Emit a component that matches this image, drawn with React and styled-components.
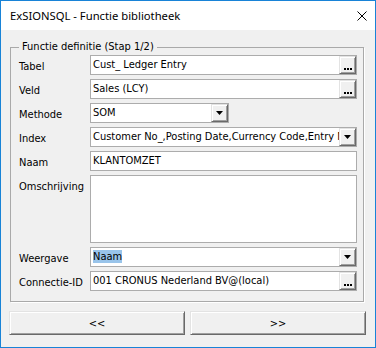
import React from 'react';
import styled, { createGlobalStyle } from 'styled-components';

const Global = createGlobalStyle`
  html, body { margin: 0; padding: 0; background: #ffffff; }
  body { font-family: "DejaVu Sans", sans-serif; }
`;

const uiFont = `
  font-family: "DejaVu Sans Condensed", "DejaVu Sans", sans-serif;
  font-stretch: condensed;
  font-size: 11px;
  color: #000;
`;

const Window = styled.div`
  box-sizing: border-box;
  width: 376px;
  height: 348px;
  border: 1px solid #1883d7;
  background: #f0f0f0;
  display: flex;
  flex-direction: column;
  overflow: hidden;
`;

const TitleBar = styled.div`
  flex: none;
  height: 29px;
  background: #ffffff;
  display: flex;
  align-items: center;
  padding: 0 8px 0 9px;
  font-family: "Noto Sans", "Open Sans", sans-serif;
  font-size: 11.25px;
  color: #000;
`;

const Title = styled.span`
  flex: 1;
  white-space: nowrap;
`;

const Close = styled.span`
  display: flex;
  width: 10px;
  height: 10px;
`;

const Body = styled.div`
  display: flex;
  flex-direction: column;
  padding: 9px 9px 0 8px;
`;

const Group = styled.fieldset`
  margin: 0 2px 0 1px;
  padding: 0 6px 10px 8px;
  border: 1px solid #a9a9a9;
  box-shadow: 1px 1px 0 #ffffff;
  min-width: 0;
`;

const Legend = styled.legend`
  ${uiFont}
  line-height: 16px;
  padding: 0 3px;
  margin: 0;
`;

const Form = styled.div`
  display: grid;
  grid-template-columns: 71px 1fr;
  row-gap: 4px;
`;

const Label = styled.div`
  ${uiFont}
  line-height: 15px;
  padding-top: 4px;
  white-space: nowrap;
`;

const Field = styled.div`
  box-sizing: border-box;
  height: ${p => p.$h || 20}px;
  width: ${p => (p.$w ? `${p.$w}px` : 'auto')};
  border: 1px solid #acacac;
  background: #ffffff;
  display: flex;
  align-items: ${p => (p.$multi ? 'flex-start' : 'stretch')};
  overflow: hidden;
`;

const Value = styled.div`
  ${uiFont}
  flex: 1;
  min-width: 0;
  padding-left: 2px;
  line-height: 18px;
  white-space: nowrap;
  overflow: hidden;
`;

const Selected = styled.span`
  background: #99c4ea;
  line-height: 13px;
  display: inline-block;
`;

const SmallButton = styled.div`
  box-sizing: border-box;
  flex: none;
  width: 17px;
  height: 18px;
  background: #f0f0f0;
  border: 1px solid;
  border-color: #e3e3e3 #696969 #696969 #e3e3e3;
  box-shadow: inset 1px 1px 0 #ffffff, inset -1px -1px 0 #a0a0a0;
  display: flex;
  align-items: ${p => (p.$dots ? 'flex-end' : 'center')};
  justify-content: center;
  padding-bottom: ${p => (p.$dots ? '3px' : '0')};
`;

const ButtonRow = styled.div`
  display: grid;
  grid-template-columns: 176px 176px;
  column-gap: 5px;
  margin-top: 9px;
`;

const NavButton = styled.div`
  box-sizing: border-box;
  height: 24px;
  background: #f0f0f0;
  border: 1px solid;
  border-color: #e3e3e3 #696969 #696969 #e3e3e3;
  box-shadow: inset 1px 1px 0 #ffffff, inset -1px -1px 0 #a0a0a0;
  display: flex;
  align-items: center;
  justify-content: center;
  ${uiFont}
`;

const Dots = () => (
  <svg width="8" height="2" viewBox="0 0 8 2">
    <rect x="0" y="0" width="2" height="2" fill="#000" />
    <rect x="3" y="0" width="2" height="2" fill="#000" />
    <rect x="6" y="0" width="2" height="2" fill="#000" />
  </svg>
);

const Arrow = () => (
  <svg width="7" height="4" viewBox="0 0 7 4">
    <polygon points="0,0 7,0 3.5,4" fill="#000" />
  </svg>
);

const DotsButton = () => (
  <SmallButton $dots>
    <Dots />
  </SmallButton>
);

const DropButton = () => (
  <SmallButton>
    <Arrow />
  </SmallButton>
);

export default function App() {
  return (
    <>
      <Global />
      <Window>
        <TitleBar>
          <Title>ExSIONSQL - Functie bibliotheek</Title>
          <Close>
            <svg width="10" height="10" viewBox="0 0 10 10">
              <path d="M0.5 0.5 L9.5 9.5 M9.5 0.5 L0.5 9.5" stroke="#000" strokeWidth="1" fill="none" />
            </svg>
          </Close>
        </TitleBar>
        <Body>
          <Group>
            <Legend>Functie definitie (Stap 1/2)</Legend>
            <Form>
              <Label>Tabel</Label>
              <Field>
                <Value>Cust_ Ledger Entry</Value>
                <DotsButton />
              </Field>

              <Label>Veld</Label>
              <Field>
                <Value>Sales (LCY)</Value>
                <DotsButton />
              </Field>

              <Label>Methode</Label>
              <Field $w={139}>
                <Value>SOM</Value>
                <DropButton />
              </Field>

              <Label>Index</Label>
              <Field>
                <Value>Customer No_,Posting Date,Currency Code,Entry No_</Value>
                <DropButton />
              </Field>

              <Label>Naam</Label>
              <Field>
                <Value>KLANTOMZET</Value>
              </Field>

              <Label>Omschrijving</Label>
              <Field $h={68} $multi>
                <Value />
              </Field>

              <Label>Weergave</Label>
              <Field>
                <Value>
                  <Selected>Naam</Selected>
                </Value>
                <DropButton />
              </Field>

              <Label>Connectie-ID</Label>
              <Field>
                <Value>001 CRONUS Nederland BV@(local)</Value>
                <DotsButton />
              </Field>
            </Form>
          </Group>
          <ButtonRow>
            <NavButton>&lt;&lt;</NavButton>
            <NavButton>&gt;&gt;</NavButton>
          </ButtonRow>
        </Body>
      </Window>
    </>
  );
}
